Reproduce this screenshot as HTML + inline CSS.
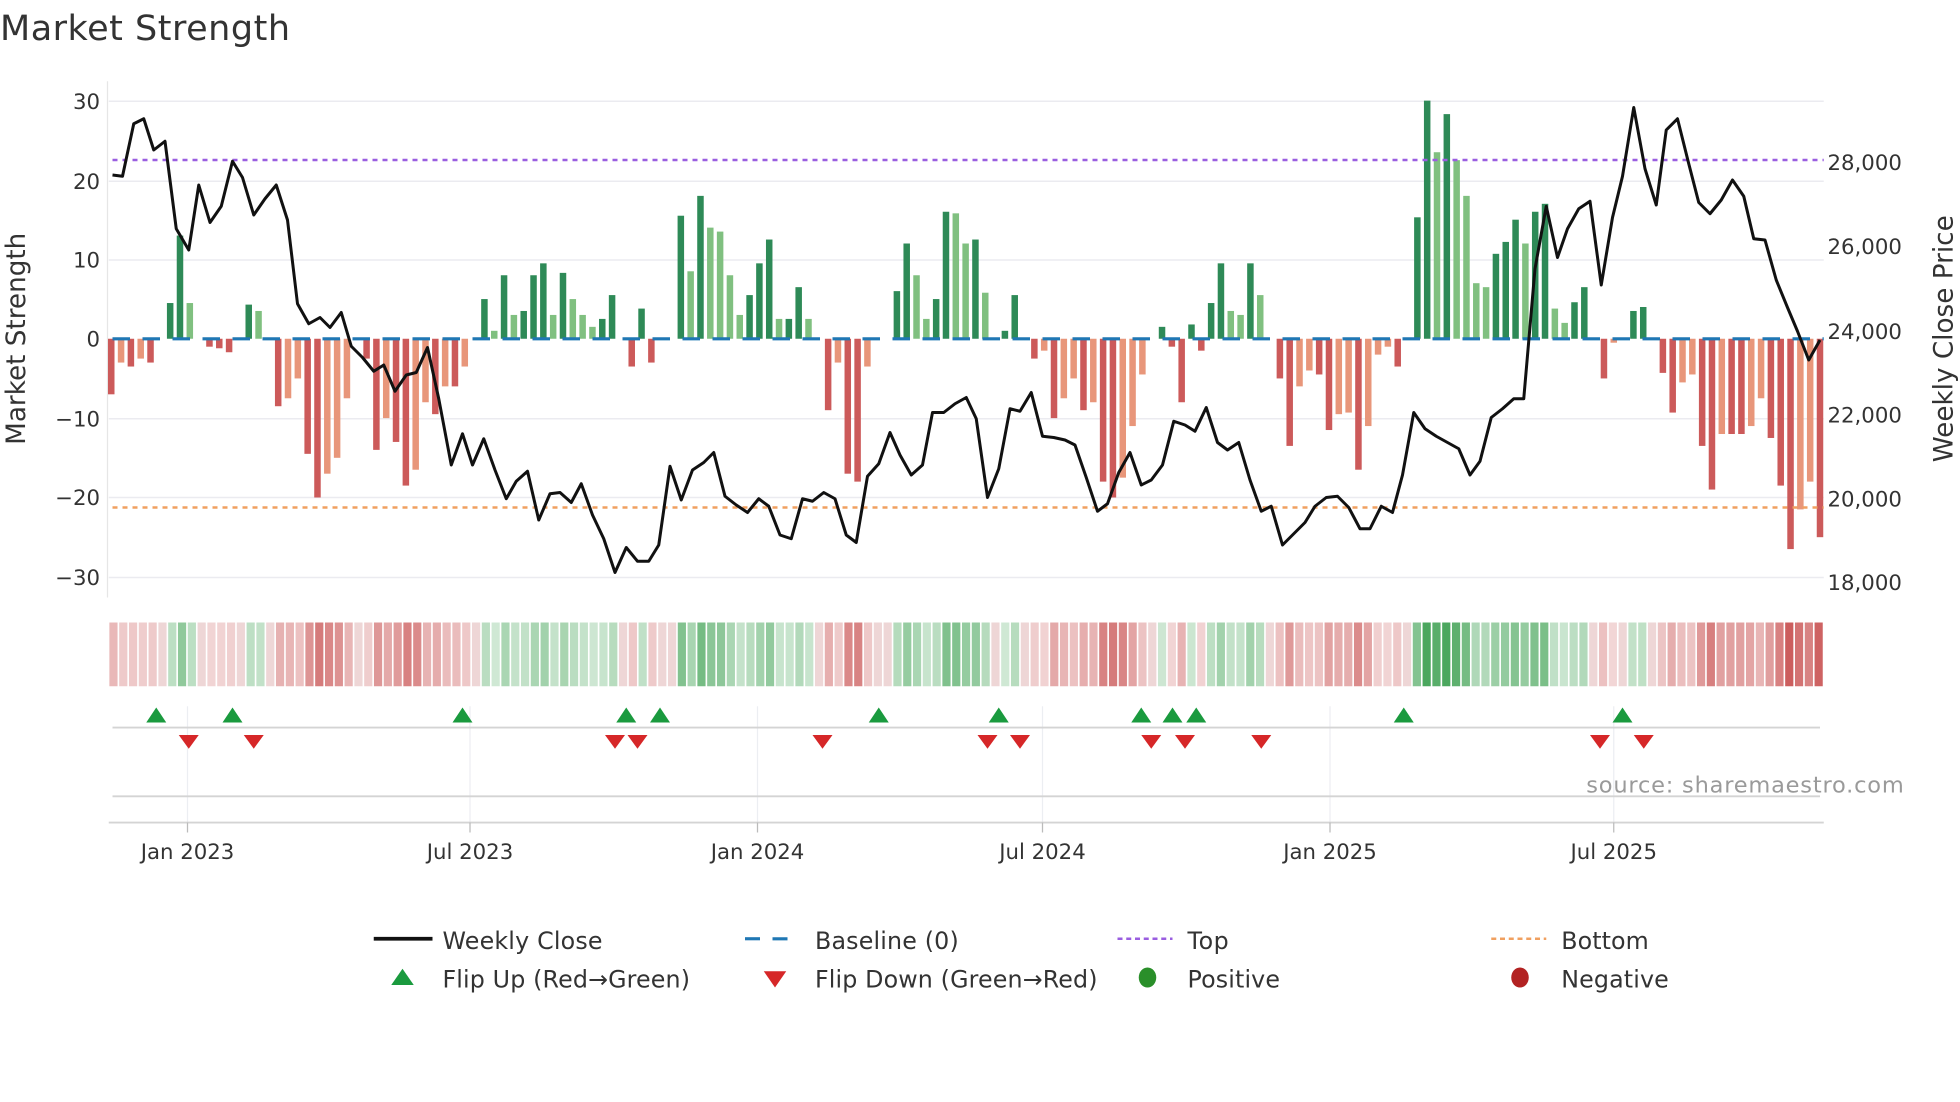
<!DOCTYPE html>
<html><head><meta charset="utf-8"><style>
html,body{margin:0;padding:0;background:#fff;}
svg{display:block;}
text{font-family:"DejaVu Sans","Liberation Sans",sans-serif;fill:#333;}
</style></head><body>
<svg id="s" width="1960" height="1102" viewBox="0 0 1568 881.6" xmlns="http://www.w3.org/2000/svg">
<rect width="1568" height="882" fill="#fff"/>
<text x="0" y="32" font-size="28" textLength="232">Market Strength</text>
<g id="grid" stroke="#ebebf0" stroke-width="1.2">
<line x1="87" x2="1459" y1="81" y2="81"/><line x1="87" x2="1459" y1="145" y2="145"/><line x1="87" x2="1459" y1="208" y2="208"/><line x1="87" x2="1459" y1="335" y2="335"/><line x1="87" x2="1459" y1="398" y2="398"/><line x1="87" x2="1459" y1="462" y2="462"/>
</g>
<line x1="86" x2="86" y1="65" y2="478" stroke="#e6e6e6" stroke-width="1"/>
<g font-size="17" text-anchor="end">
<text x="80" y="87">30</text><text x="80" y="151">20</text><text x="80" y="214">10</text><text x="80" y="277">0</text><text x="80" y="341">−10</text><text x="80" y="404">−20</text><text x="80" y="468">−30</text>
</g>
<g font-size="17">
<text x="1462" y="136">28,000</text><text x="1462" y="203">26,000</text><text x="1462" y="271">24,000</text><text x="1462" y="338">22,000</text><text x="1462" y="405">20,000</text><text x="1462" y="472">18,000</text>
</g>
<text transform="translate(20,271) rotate(-90)" font-size="21" text-anchor="middle">Market Strength</text>
<text transform="translate(1562,271) rotate(-90)" font-size="21" text-anchor="middle">Weekly Close Price</text>
<g id="bars"></g>
<line x1="90" x2="1459" y1="271" y2="271" stroke="#1f77b4" stroke-width="2.5" stroke-dasharray="14,10"/>
<line x1="90" x2="1459" y1="128" y2="128" stroke="#9a5ee0" stroke-width="2" stroke-dasharray="4,4"/>
<line x1="90" x2="1459" y1="406" y2="406" stroke="#f0a060" stroke-width="2" stroke-dasharray="4,4"/>
<polyline id="price" fill="none" stroke="#111" stroke-width="2.4" stroke-linejoin="round"/>
<g id="heat"></g>
<g stroke="#eceef2" stroke-width="1">
<line x1="150" x2="150" y1="565" y2="658"/><line x1="376" x2="376" y1="565" y2="658"/><line x1="606" x2="606" y1="565" y2="658"/><line x1="834" x2="834" y1="565" y2="658"/><line x1="1064" x2="1064" y1="565" y2="658"/><line x1="1291" x2="1291" y1="565" y2="658"/>
</g>
<line x1="90" x2="1456" y1="582" y2="582" stroke="#d4d4d4" stroke-width="1.5"/>
<line x1="90" x2="1456" y1="637" y2="637" stroke="#d4d4d4" stroke-width="1.5"/>
<line x1="87" x2="1459" y1="658" y2="658" stroke="#d4d4d4" stroke-width="1.5"/>
<g stroke="#bbb" stroke-width="1"><line x1="150" x2="150" y1="658" y2="666"/><line x1="376" x2="376" y1="658" y2="666"/><line x1="606" x2="606" y1="658" y2="666"/><line x1="834" x2="834" y1="658" y2="666"/><line x1="1064" x2="1064" y1="658" y2="666"/><line x1="1291" x2="1291" y1="658" y2="666"/></g>
<g id="mk"></g>
<text x="1269" y="634" font-size="18" style="fill:#9a9a9a" textLength="254">source: sharemaestro.com</text>
<g font-size="17" text-anchor="middle">
<text x="150" y="687">Jan 2023</text><text x="376" y="687">Jul 2023</text><text x="606" y="687">Jan 2024</text><text x="834" y="687">Jul 2024</text><text x="1064" y="687">Jan 2025</text><text x="1291" y="687">Jul 2025</text>
</g>
<g font-size="19">
<line x1="299" x2="346" y1="751" y2="751" stroke="#111" stroke-width="3"/>
<text x="354" y="759" textLength="128">Weekly Close</text>
<line x1="596" x2="640" y1="751" y2="751" stroke="#1f77b4" stroke-width="2.5" stroke-dasharray="12,10"/>
<text x="652" y="759" textLength="115">Baseline (0)</text>
<line x1="894" x2="938" y1="751" y2="751" stroke="#9a5ee0" stroke-width="2" stroke-dasharray="4,3"/>
<text x="950" y="759" textLength="33">Top</text>
<line x1="1193" x2="1237" y1="751" y2="751" stroke="#f0a060" stroke-width="2" stroke-dasharray="4,3"/>
<text x="1249" y="759" textLength="70">Bottom</text>
<polygon points="313,788 331,788 322,775" fill="#1a9a3e"/>
<text x="354" y="790" textLength="198">Flip Up (Red→Green)</text>
<polygon points="611,777 629,777 620,790" fill="#d62728"/>
<text x="652" y="790" textLength="226">Flip Down (Green→Red)</text>
<ellipse cx="918" cy="782" rx="7" ry="8" fill="#2a8f2a"/>
<text x="950" y="790" textLength="74">Positive</text>
<ellipse cx="1216" cy="782" rx="7" ry="8" fill="#b22222"/>
<text x="1249" y="790" textLength="86">Negative</text>
</g>
</svg>
<script>
var NS="http://www.w3.org/2000/svg";
function el(t,a,p){var e=document.createElementNS(NS,t);for(var k in a)e.setAttribute(k,a[k]);p.appendChild(e);return e;}
var v=[-7,-3,-3.5,-2.5,-3,0,4.5,13,4.5,0,-1,-1.2,-1.7,0,4.3,3.5,0,-8.5,-7.5,-5,-14.5,-20,-17,-15,-7.5,0,-2.5,-14,-10,-13,-18.5,-16.5,-8,-9.5,-6,-6,-3.5,0,5,1,8,3,3.5,8,9.5,3,8.3,5,3,1.5,2.5,5.5,0,-3.5,3.8,-3,0,0,15.5,8.5,18,14,13.5,8,3,5.5,9.5,12.5,2.5,2.5,6.5,2.5,0,-9,-3,-17,-18,-3.5,0,0,6,12,8,2.5,5,16,15.8,12,12.5,5.8,0,1,5.5,0,-2.5,-1.5,-10,-7.5,-5,-9,-8,-18,-20,-17.5,-11,-4.5,0,1.5,-1,-8,1.8,-1.5,4.5,9.5,3.5,3,9.5,5.5,0,-5,-13.5,-6,-4,-4.5,-11.5,-9.5,-9.3,-16.5,-11,-2,-1,-3.5,0,15.3,30,23.5,28.3,22.5,18,7,6.5,10.7,12.2,15,12,16,17,3.8,2,4.6,6.5,0,-5,-0.5,0,3.5,4,0,-4.3,-9.3,-5.5,-4.5,-13.5,-19,-12,-12,-12,-11,-7.5,-12.5,-18.5,-26.5,-21.5,-18,-25];
var n=v.length,x0=89,x1=1456,p=(x1-x0)/(n-1),u=6.35;
var bars=document.getElementById('bars'),heat=document.getElementById('heat');
var hp=(1459-87)/n;
for(var i=0;i<n;i++){
 var a=v[i],x=x0+i*p,prev=i?v[i-1]:0,dark=Math.abs(a)>=Math.abs(prev)||Math.sign(a)!=Math.sign(prev);
 if(a!=0){var c=a>0?(dark?"#2e8a57":"#80c080"):(dark?"#cc5a5a":"#e8967a");
  var h=Math.abs(a)*u;el('rect',{x:x-2.6,y:a>0?271-h:271,width:5.2,height:h,fill:c},bars);}
 var t=Math.min(Math.abs(a)/26,1),al=0.22+0.7*t;
 var col=a>=0?"rgba(60,160,80,"+al+")":"rgba(200,80,80,"+al+")";
 if(a==0)col="rgba(200,120,120,0.3)";
 el('rect',{x:87+i*hp+0.5,y:498,width:hp-1.3,height:51,fill:col},heat);
}
var pts=[[90,140],[98,141],[107,99],[115,95],[123,120],[132,113],[141,183],[151,200],[159,148],[168,178],[177,165],[186,129],[194,142],[203,172],[212,159],[221,148],[230,176],[238,243],[247,259],[256,254],[264,262],[273,250],[281,277],[290,286],[299,297],[307,292],[316,313],[325,300],[333,298],[342,278],[351,319],[361,372],[370,347],[378,372],[387,351],[396,376],[405,399],[413,385],[422,377],[431,416],[440,395],[448,394],[457,402],[465,387],[474,412],[483,431],[492,458],[501,438],[510,449],[519,449],[527,436],[536,373],[545,400],[554,376],[563,370],[571,362],[580,397],[589,404],[598,410],[607,399],[615,405],[624,428],[633,431],[642,399],[650,401],[659,394],[668,399],[677,428],[685,434],[694,381],[703,371],[712,346],[720,364],[729,380],[738,372],[746,330],[755,330],[764,323],[773,318],[781,335],[790,398],[799,375],[808,327],[816,329],[825,314],[834,349],[843,350],[852,352],[860,356],[869,382],[878,409],[886,403],[895,378],[904,362],[913,388],[921,384],[930,372],[939,337],[948,340],[956,345],[965,326],[974,354],[982,360],[991,354],[1000,384],[1009,409],[1017,405],[1026,436],[1035,427],[1044,418],[1052,405],[1061,398],[1070,397],[1079,406],[1088,423],[1096,423],[1105,405],[1114,410],[1122,380],[1131,330],[1140,343],[1149,349],[1158,354],[1167,359],[1176,380],[1184,369],[1193,334],[1202,327],[1211,319],[1219,319],[1228,215],[1237,165],[1246,206],[1254,183],[1263,167],[1272,161],[1281,228],[1290,174],[1298,141],[1307,86],[1316,135],[1325,164],[1333,104],[1342,95],[1351,131],[1359,162],[1368,171],[1377,160],[1386,144],[1395,157],[1403,191],[1412,192],[1421,224],[1430,246],[1438,265],[1447,288],[1456,272]];
document.getElementById('price').setAttribute('points',pts.map(function(q){return q.join(',')}).join(' '));
var mk=document.getElementById('mk');
[125,186,370,501,528,703,799,913,938,957,1123,1298].forEach(function(x){el('polygon',{points:(x-8)+',578 '+(x+8)+',578 '+x+',566',fill:'#1a9a3e'},mk);});
[151,203,492,510,658,790,816,921,948,1009,1280,1315].forEach(function(x){el('polygon',{points:(x-8)+',588 '+(x+8)+',588 '+x+',599',fill:'#d62728'},mk);});
</script>
</body></html>
